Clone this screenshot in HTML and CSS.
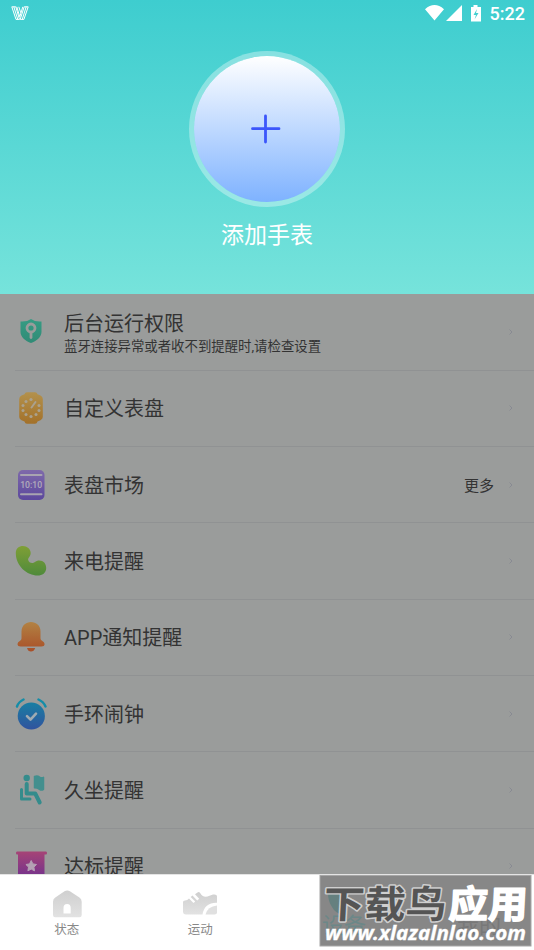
FILE: index.html
```html
<!DOCTYPE html>
<html lang="zh-CN">
<head>
<meta charset="utf-8">
<title>添加手表</title>
<link rel="stylesheet" href="styles.css">
</head>
<body>
<div class="screen">
  <header class="hero">
    <div class="status">
      <svg class="brand" width="18" height="15" viewBox="0 0 18 15" fill="none" stroke="#fff" stroke-width="1"><path d="M.8.8h4l3.700 12.600H5zM2.800.8l4 12.600M5.800.8l3 10 3-10M7.800.8l2 6M17.200.8h-4L9.200 13.400h3.700zM15.200.8l-4 12.600"/></svg>
      <div class="signals">
        <svg width="58" height="18" viewBox="0 0 58 18" fill="#fff"><path d="M0 4.200Q9.500-4 19 4.200L9.500 15.500zM37 0v16H21zM48.500 0h4v2H56v14.500H46V2h2.500z"/><path d="M52 4l-3.500 6H51l-1.500 4.500L53.500 8H51z" fill="#43cfd0"/></svg>
        <span class="clock">5:22</span>
      </div>
    </div>
    <div class="add-circle"><svg width="30" height="30" viewBox="0 0 30 30" stroke="#3b56fb" stroke-width="2.800" stroke-linecap="round"><path d="M14.500 2v26M1.500 14.700h26.500"/></svg></div>
    <div class="add-label">添加手表</div>
  </header>

  <main class="list">
    <div class="row">
      <svg class="icon" viewBox="0 0 32 32"><defs><linearGradient id="g1" x2="0" y2="1"><stop stop-color="#369c84"/><stop offset="1" stop-color="#318b76"/></linearGradient></defs><path d="M16 3Q20 6 26.500 5.500V16c0 5-5 9-10.500 11C10.500 25 5.500 21 5.500 16V5.500Q12 6 16 3z" fill="url(#g1)"/><g fill="none" stroke="#9a9c9b" stroke-width="2.800" stroke-linecap="round"><circle cx="16" cy="12" r="4"/><path d="M16 16.500v5"/></g></svg>
      <div class="text"><div class="title">后台运行权限</div><div class="sub">蓝牙连接异常或者收不到提醒时,请检查设置</div></div>
      <svg class="arrow" viewBox="0 0 4 6"><path d="M.5.5L3 3 .5 5.500"/></svg>
    </div>
    <div class="row">
      <svg class="icon" viewBox="0 0 32 32"><defs><linearGradient id="g2" x2="0" y2="1"><stop stop-color="#b3914c"/><stop offset="1" stop-color="#a3712a"/></linearGradient></defs><path d="M12 .3h8q2 0 2.500 2l3 1.200q2.300 1.200 2.300 3.400v18.200q0 2-2.300 3.200l-3 1.200q-.500 2.200-2.500 2.200h-8q-2 0-2.500-2.200l-3-1.200q-2.300-1.200-2.300-3.200V6.900q0-2.200 2.300-3.400l3-1.200q.500-2 2.500-2z" fill="url(#g2)"/><g fill="#aaa18f"><circle cx="16" cy="7.500" r="1.600"/><circle cx="11" cy="9.500" r="1.500"/><circle cx="8" cy="13.500" r="1.500"/><circle cx="8" cy="18.500" r="1.500"/><circle cx="11" cy="22.500" r="1.500"/><circle cx="16" cy="24.500" r="1.600"/><circle cx="21" cy="22.500" r="1.500"/><circle cx="24" cy="18.500" r="1.500"/><circle cx="24" cy="13.500" r="1.500"/></g><path d="M16.500 15.500l4-5.500" stroke="#aaa18f" stroke-width="2" stroke-linecap="round"/></svg>
      <div class="text"><div class="title">自定义表盘</div></div>
      <svg class="arrow" viewBox="0 0 4 6"><path d="M.5.5L3 3 .5 5.500"/></svg>
    </div>
    <div class="row">
      <svg class="icon" viewBox="0 0 32 32"><defs><linearGradient id="g3" x2="0" y2="1"><stop stop-color="#7e69aa"/><stop offset="1" stop-color="#5c489d"/></linearGradient></defs><rect x="3" y="1" width="26.500" height="30" rx="5" fill="url(#g3)"/><path d="M6 6h20.500M6 25.200h20.500" stroke="#a8a4b0" stroke-width="2" stroke-linecap="round"/><text class="watch-time" x="16.200" y="19.200" text-anchor="middle" textLength="22" lengthAdjust="spacingAndGlyphs">10:10</text></svg>
      <div class="text"><div class="title">表盘市场</div></div>
      <span class="more">更多</span>
      <svg class="arrow" viewBox="0 0 4 6"><path d="M.5.5L3 3 .5 5.500"/></svg>
    </div>
    <div class="row">
      <svg class="icon" viewBox="0 0 32 32"><defs><linearGradient id="g4" x2="0" y2="1"><stop stop-color="#7f9f36"/><stop offset="1" stop-color="#4f8a3b"/></linearGradient></defs><path d="M.8 8C.8 3.500 4 1 8 1s7.700 3 7.700 7c0 3.500-3 5-2.500 7 .500 2 2 3 4 3 2.500 0 3.500-2.500 7-2.500 4.300 0 7 3 7 7.500 0 5-4 7.500-8.500 7.500C12 30.500.8 21 .8 8z" fill="url(#g4)"/></svg>
      <div class="text"><div class="title">来电提醒</div></div>
      <svg class="arrow" viewBox="0 0 4 6"><path d="M.5.5L3 3 .5 5.500"/></svg>
    </div>
    <div class="row">
      <svg class="icon" viewBox="0 0 32 32"><defs><linearGradient id="g5" x2="0" y2="1"><stop stop-color="#b28243"/><stop offset="1" stop-color="#a94f28"/></linearGradient></defs><path d="M6.500 10.500C6.500 4.500 11 1 16 1S25.500 4.500 25.500 10.500v7q0 1.500 1.500 2.300 2.600 1.400 2.600 3.200 0 2.500-3.300 2.500H5.800q-3.300 0-3.300-2.500 0-1.800 2.600-3.200Q6.500 19 6.500 17.500zM12 27h8.200Q19 30.500 16 30.500T12 27z" fill="url(#g5)"/></svg>
      <div class="text"><div class="title">APP通知提醒</div></div>
      <svg class="arrow" viewBox="0 0 4 6"><path d="M.5.5L3 3 .5 5.500"/></svg>
    </div>
    <div class="row">
      <svg class="icon" viewBox="0 0 32 32"><defs><linearGradient id="g6" x2="0" y2="1"><stop stop-color="#197fa3"/><stop offset="1" stop-color="#31539e"/></linearGradient></defs><circle cx="16.300" cy="18" r="13.600" fill="url(#g6)"/><path d="M2 8.500Q3.700 3.700 8.500 1.500M23.500 1.500Q28.500 3.700 30.500 8.500" fill="none" stroke="#148da8" stroke-width="2.400" stroke-linecap="round"/><path d="M12 18.200l3.500 3.500 5.500-6" fill="none" stroke="#a0abb2" stroke-width="2.600" stroke-linecap="round" stroke-linejoin="round"/></svg>
      <div class="text"><div class="title">手环闹钟</div></div>
      <svg class="arrow" viewBox="0 0 4 6"><path d="M.5.5L3 3 .5 5.500"/></svg>
    </div>
    <div class="row">
      <svg class="icon" viewBox="0 0 32 32"><g fill="#348c8c" stroke="#348c8c" stroke-linejoin="round" stroke-linecap="round"><circle cx="11.700" cy="4" r="3.200" stroke="none"/><path d="M19.500 2.500q3-1 5 .5t4 .300v12q-2 1.500-4 0t-5-1.500z" stroke-width="1.500" fill="#438f8e" stroke="#438f8e"/><path d="M11.700 10v9.500h8.500l4.500 9" fill="none" stroke-width="4"/><path d="M6.500 15.500V25H15" fill="none" stroke-width="3"/></g></svg>
      <div class="text"><div class="title">久坐提醒</div></div>
      <svg class="arrow" viewBox="0 0 4 6"><path d="M.5.5L3 3 .5 5.500"/></svg>
    </div>
    <div class="row">
      <svg class="icon" viewBox="0 0 32 32"><defs><linearGradient id="g8" x2="0" y2="1"><stop stop-color="#a64476"/><stop offset=".75" stop-color="#79348a"/></linearGradient></defs><path d="M2 1.500h29q1 0 1 1.500t-1 1.500h-1.500v24L16 32 3 29V4.500H2Q1 4.500 1 3t1-1.500z" fill="url(#g8)"/><path d="M16.200 10.500l1.700 3.400 3.600.600-2.600 2.600.600 3.700-3.300-1.700-3.300 1.700.6-3.700-2.600-2.600 3.600-.600z" fill="#b4a1b4" stroke="#b4a1b4" stroke-linejoin="round"/></svg>
      <div class="text"><div class="title">达标提醒</div></div>
      <svg class="arrow" viewBox="0 0 4 6"><path d="M.5.5L3 3 .5 5.500"/></svg>
    </div>
  </main>

  <nav class="tabs">
    <div class="tab">
      <svg width="36" height="30" viewBox="0 0 36 30"><defs><linearGradient id="gt" x2="0" y2="1"><stop stop-color="#cfcfcf"/><stop offset="1" stop-color="#e2e2e2"/></linearGradient></defs><path d="M15.500 1.300q2.700-1.600 5.400 0l9.500 6.200q2.300 1.500 2.300 4.200V25q0 2.300-2.300 2.300H6.200Q4 27.300 4 25V11.700q0-2.700 2.300-4.200zM14.500 23.500h7.200V18a3.600 4 0 0 0-7.200 0z" fill="url(#gt)" fill-rule="evenodd"/></svg>
      <span>状态</span>
    </div>
    <div class="tab">
      <svg width="36" height="30" viewBox="0 0 36 30"><path d="M1 12q0-1.500 2-1.500 2.500 0 4-2l4.500 4.500 1.700-1.500L8.700 7l1.800-1.500 4.700 5 2-1.800-4.200-4.500L15.500 2.500q1.300-1 2.500.200Q21 8.500 27.500 5.800L31 4.500q4-.500 4 2v6.300Q22.500 12.500 20.500 24.500H4q-3 0-3-3z" fill="url(#gt)"/><path d="M23.500 24.500Q25.500 16.500 35 15.500v7q0 2-2.500 2z" fill="#e0e0e0"/></svg>
      <span>运动</span>
    </div>
    <div class="tab"></div>
    <div class="tab"></div>
    <svg class="watermark" width="213" height="72" viewBox="0 0 213 72">
      <rect width="211" height="70.500" x="1" y=".5" fill="#878787" stroke="#a6a6a6"/>
      <path d="M9 18h15v22q-8-2-11-8-4-6-4-14z" fill="#65807f"/>
      <text class="under teal" x="3" y="58">设备</text>
      <text class="under" x="138" y="58">我的</text>
      <g transform="translate(4 43) skewX(-3)">
        <text class="wm-title outlined" x="0" y="0" textLength="123" lengthAdjust="spacingAndGlyphs">下载鸟</text>
        <text class="wm-title solid" x="125" y="0" textLength="79" lengthAdjust="spacingAndGlyphs">应用</text>
      </g>
      <text class="wm-url" x="6" y="65" textLength="201" lengthAdjust="spacingAndGlyphs">www.xlazalnlao.com</text>
    </svg>
  </nav>
</div>
</body>
</html>
```
FILE: styles.css
```css
* { box-sizing: border-box; }
body {
  margin: 0;
  font-family: Roboto, "Noto Sans CJK SC", sans-serif;
}
.screen {
  width: 534px;
  height: 950px;
  display: flex;
  flex-direction: column;
  overflow: hidden;
  background: #fff;
}
.hero {
  flex: 0 0 294px;
  display: flex;
  flex-direction: column;
  align-items: center;
  background: linear-gradient(#3ecdcf, #76e3db);
}
.status {
  width: 100%;
  height: 51px;
  padding: 5px 9px 0 11px;
  display: flex;
  align-items: flex-start;
  justify-content: space-between;
}
.brand { margin-top: 1px; }
.signals { display: flex; gap: 7px; }
.clock {
  color: #fff;
  font-size: 18px;
  font-weight: 500;
  line-height: 18px;
}
.add-circle {
  width: 156px;
  height: 156px;
  border: 5px solid rgba(255, 255, 255, .35);
  border-radius: 50%;
  background: linear-gradient(#fff, #7eb2ff) padding-box;
  display: flex;
  align-items: center;
  justify-content: center;
  padding-right: 3px;
}
.add-label {
  margin-top: 11px;
  color: #fff;
  font-size: 23px;
  line-height: 36px;
}
.list {
  flex: 0 0 580px;
  overflow: hidden;
  background: #9a9c9b;
}
.row {
  height: 76.35px;
  margin-left: 15px;
  padding-right: 21px;
  border-bottom: 1px solid #909293;
  display: flex;
  align-items: center;
}
.icon { width: 32px; height: 32px; flex: none; }
.text {
  flex: 1;
  margin-left: 17px;
  padding-top: 2px;
  color: #333;
}
.title { font-size: 20px; line-height: 26px; }
.sub { font-size: 13.4px; line-height: 20px; white-space: nowrap; }
.row:first-child { height: 76.7px; }
.row:first-child .text { padding-top: 4px; }
.more { font-size: 15px; color: #333; margin-right: 15px; }
.arrow {
  width: 4px;
  height: 6px;
  fill: none;
  stroke: #84858f;
  stroke-width: .8;
}
.watch-time {
  font: 500 9px Roboto, sans-serif;
  fill: #b0aaba;
}
.tabs {
  flex: 1;
  position: relative;
  display: flex;
  border-top: 1px solid #e4e4e4;
}
.tab {
  flex: 1;
  display: flex;
  flex-direction: column;
  align-items: center;
  padding-top: 15px;
  color: #888;
  font-size: 12.5px;
  line-height: 20px;
}
.watermark { position: absolute; left: 319px; top: 0; }
.under { font-size: 22px; fill: #787878; }
.under.teal { fill: #6c8788; }
.wm-title {
  font: 700 38px "Noto Sans CJK SC", sans-serif;
  paint-order: stroke;
  stroke-linejoin: round;
}
.outlined { fill: #555; stroke: #cfcfcf; stroke-width: 3px; }
.solid { fill: #fff; stroke: #fff; stroke-width: 1.5px; }
.wm-url {
  font: italic 700 20px "Noto Sans", sans-serif;
  fill: #fff;
  stroke: #fff;
  stroke-width: .3px;
}
```
